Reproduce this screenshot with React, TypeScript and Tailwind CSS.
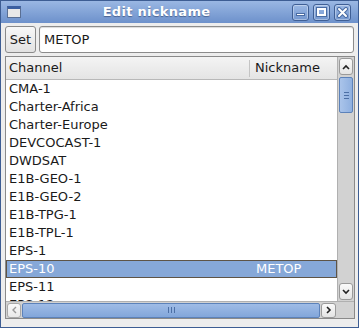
import React from "react";

const rows: [string, string][] = [
  ["CMA-1", ""],
  ["Charter-Africa", ""],
  ["Charter-Europe", ""],
  ["DEVCOCAST-1", ""],
  ["DWDSAT", ""],
  ["E1B-GEO-1", ""],
  ["E1B-GEO-2", ""],
  ["E1B-TPG-1", ""],
  ["E1B-TPL-1", ""],
  ["EPS-1", ""],
  ["EPS-10", "METOP"],
  ["EPS-11", ""],
  ["EPS-12", ""],
];

const TitleButton = ({ children }: { children: React.ReactNode }) => (
  <div className="w-[17px] h-[17px] rounded-[3px] border border-[#3f5f95] bg-gradient-to-b from-[#9bb8e4] to-[#7497cf] flex items-center justify-center shadow-[inset_0_0_0_1px_rgba(255,255,255,0.35)]">
    {children}
  </div>
);

export default function App() {
  return (
    <div
      className="w-[359px] h-[328px] flex flex-col bg-[#ededed] border border-[#3d5d93] overflow-hidden text-[13px] text-[#1a1a1a]"
      style={{ fontFamily: '"DejaVu Sans", sans-serif' }}
    >
      {/* Title bar */}
      <div className="h-[22px] shrink-0 flex items-center px-[6px] bg-gradient-to-b from-[#9ab7e3] to-[#6d91cb] relative">
        <div className="w-[14px] h-[12px] border border-[#5a6f93] bg-[#e8e8e8] border-t-[3px] border-t-[#3b5fa0]" />
        <div className="flex-1 text-center font-bold text-white text-[13px] tracking-[0.3px] [text-shadow:0_1px_1px_rgba(40,60,100,0.6)]">
          Edit nickname
        </div>
        <div className="flex gap-[4px] mr-[1px]">
          <TitleButton>
            <div className="w-[9px] h-[3px] bg-white border border-[#4a6ca3] mt-[5px]" />
          </TitleButton>
          <TitleButton>
            <div className="w-[9px] h-[8px] border-[2px] border-white outline outline-1 outline-[#4a6ca3]" />
          </TitleButton>
          <TitleButton>
            <svg width="11" height="11" viewBox="0 0 11 11">
              <path d="M2 2 L9 9 M9 2 L2 9" stroke="#4a6ca3" strokeWidth="4" strokeLinecap="round" />
              <path d="M2 2 L9 9 M9 2 L2 9" stroke="#fff" strokeWidth="2" strokeLinecap="round" />
            </svg>
          </TitleButton>
        </div>
      </div>

      {/* Set row */}
      <div className="flex gap-[3px] mt-[3px] ml-[4px] mr-[4px] h-[27px] shrink-0">
        <button className="w-[31px] h-full rounded-[3px] border border-[#8a8a8a] bg-gradient-to-b from-[#f8f8f8] to-[#e2e2e2] text-[13px] text-[#1a1a1a] leading-none">
          Set
        </button>
        <div className="flex-1 h-full rounded-[3px] border border-[#8c8c8c] bg-white flex items-center px-[4px] shadow-[inset_0_1px_1px_rgba(0,0,0,0.15)]">
          METOP
        </div>
      </div>

      {/* Tree view */}
      <div className="mt-[3px] ml-[4px] mr-[3px] h-[263px] border border-[#8a8a8a] bg-white flex flex-col shrink-0">
        <div className="flex flex-1 min-h-0">
          <div className="flex-1 flex flex-col min-w-0 overflow-hidden">
            <div className="h-[23px] shrink-0 flex items-center bg-gradient-to-b from-[#f4f4f4] to-[#e4e4e4] border-b border-[#b8b8b8]">
              <div className="w-[244px] pl-[3px] border-r border-[#c4c4c4] h-[17px] flex items-center">
                Channel
              </div>
              <div className="pl-[5px]">Nickname</div>
            </div>
            <div className="flex-1 overflow-hidden">
              {rows.map(([ch, nick]) => {
                const sel = nick !== "";
                return (
                  <div
                    key={ch}
                    className={
                      sel
                        ? "h-[18px] flex items-center bg-[#86a8d8] text-white border border-[#5e5446] -ml-[0px]"
                        : "h-[18px] flex items-center border border-transparent"
                    }
                  >
                    <div className="w-[244px] pl-[2px] whitespace-nowrap">{ch}</div>
                    <div className="pl-[5px]">{nick}</div>
                  </div>
                );
              })}
            </div>
          </div>
          {/* Vertical scrollbar */}
          <div className="w-[17px] shrink-0 bg-[#d2d2d2] border-l border-[#b0b0b0] flex flex-col">
            <div className="h-[17px] mx-[1px] mt-[1px] rounded-[3px] border border-[#9a9a9a] bg-gradient-to-b from-[#fafafa] to-[#e4e4e4] flex items-center justify-center">
              <svg width="8" height="6" viewBox="0 0 8 6">
                <path d="M1 5 L4 2 L7 5" stroke="#222" strokeWidth="1.6" fill="none" />
              </svg>
            </div>
            <div className="h-[36px] mt-[2px] mx-[1px] rounded-[2px] border border-[#5c82ba] bg-gradient-to-r from-[#aac4ea] to-[#8fb0e0] flex flex-col items-center justify-center gap-[2px]">
              <div className="w-[5px] h-px bg-[#4c6fa5]" />
              <div className="w-[5px] h-px bg-[#4c6fa5]" />
              <div className="w-[5px] h-px bg-[#4c6fa5]" />
            </div>
            <div className="flex-1" />
            <div className="h-[17px] mx-[1px] mb-[1px] rounded-[3px] border border-[#9a9a9a] bg-gradient-to-b from-[#fafafa] to-[#e4e4e4] flex items-center justify-center">
              <svg width="8" height="6" viewBox="0 0 8 6">
                <path d="M1 1 L4 4 L7 1" stroke="#222" strokeWidth="1.6" fill="none" />
              </svg>
            </div>
          </div>
        </div>
        {/* Horizontal scrollbar */}
        <div className="h-[17px] shrink-0 bg-[#d2d2d2] border-t border-[#b0b0b0] flex items-center pr-[17px]">
          <div className="w-[14px] h-[15px] ml-[1px] rounded-[3px] border border-[#a8a8a8] bg-gradient-to-b from-[#fafafa] to-[#e8e8e8] flex items-center justify-center">
            <svg width="6" height="8" viewBox="0 0 6 8">
              <path d="M5 1 L2 4 L5 7" stroke="#999" strokeWidth="1.4" fill="none" />
            </svg>
          </div>
          <div className="flex-1 h-[15px] mx-[1px] rounded-[2px] border border-[#5c82ba] bg-gradient-to-b from-[#9fbce6] to-[#82a6da] flex items-center justify-center gap-[2px]">
            <div className="w-px h-[6px] bg-[#4c6fa5]" />
            <div className="w-px h-[6px] bg-[#4c6fa5]" />
            <div className="w-px h-[6px] bg-[#4c6fa5]" />
          </div>
          <div className="w-[15px] h-[15px] mr-[1px] rounded-[3px] border border-[#9a9a9a] bg-gradient-to-b from-[#fafafa] to-[#e4e4e4] flex items-center justify-center">
            <svg width="6" height="8" viewBox="0 0 6 8">
              <path d="M1 1 L4 4 L1 7" stroke="#222" strokeWidth="1.6" fill="none" />
            </svg>
          </div>
        </div>
      </div>
    </div>
  );
}
